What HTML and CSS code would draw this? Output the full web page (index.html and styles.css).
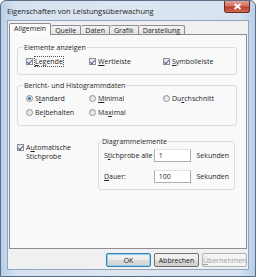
FILE: index.html
```html
<!DOCTYPE html>
<html lang="de">
<head>
  <meta charset="UTF-8" />
  <title>Eigenschaften von Leistungsüberwachung</title>
  <link rel="stylesheet" href="styles.css">
</head>
<body>
  <div class="window">
    <div class="titlebar">
      <span class="title">Eigenschaften von Leistungsüberwachung</span>
      <span class="close">
        <svg width="9" height="7" viewBox="0 0 9 7"><path d="M1.5 1 L7.5 6 M7.5 1 L1.5 6" stroke="#fff" stroke-width="1.8"/></svg>
      </span>
    </div>

    <div class="client">
      <div class="tabs">
        <span class="tab active">Allgemein</span>
        <span class="tab">Quelle</span>
        <span class="tab">Daten</span>
        <span class="tab">Grafik</span>
        <span class="tab">Darstellung</span>
      </div>

      <div class="panel">
        <fieldset class="group elements">
          <legend>Elemente anzeigen</legend>
          <div class="grid">
            <label class="opt"><span class="check on"></span><span class="focus"><u>L</u>egende</span></label>
            <label class="opt"><span class="check on"></span><span><u>W</u>ertleiste</span></label>
            <label class="opt"><span class="check on"></span><span><u>S</u>ymbolleiste</span></label>
          </div>
        </fieldset>

        <fieldset class="group report">
          <legend>Bericht- und Histogrammdaten</legend>
          <div class="grid">
            <label class="opt"><span class="radio on"></span><span>S<u>t</u>andard</span></label>
            <label class="opt"><span class="radio"></span><span><u>M</u>inimal</span></label>
            <label class="opt"><span class="radio"></span><span>Du<u>r</u>chschnitt</span></label>
            <label class="opt"><span class="radio"></span><span>Be<u>i</u>behalten</span></label>
            <label class="opt"><span class="radio"></span><span>Ma<u>x</u>imal</span></label>
          </div>
        </fieldset>

        <div class="lower">
          <label class="opt auto"><span class="check on"></span><span>A<u>u</u>tomatische<br>Stichprobe</span></label>

          <fieldset class="group diagram">
            <legend>Diagrammelemente</legend>
            <div class="field">
              <span class="field-label">S<u>t</u>ichprobe alle</span>
              <span class="input">1</span>
              <span>Sekunden</span>
            </div>
            <div class="field">
              <span class="field-label"><u>D</u>auer:</span>
              <span class="input">100</span>
              <span>Sekunden</span>
            </div>
          </fieldset>
        </div>
      </div>

      <div class="buttons">
        <button class="btn default">OK</button>
        <button class="btn">Abbrechen</button>
        <button class="btn" disabled><u>Ü</u>bernehmen</button>
      </div>
    </div>
  </div>
</body>
</html>
```

FILE: styles.css
```css
body {
  margin: 0;
  font-family: 'Open Sans', 'Noto Sans', sans-serif;
  font-size: 7px;
  color: #262626;
  background: #fff;
}

u {
  text-decoration-thickness: 1px;
  text-underline-offset: 1px;
}

.window {
  width: 256px;
  height: 277px;
  box-sizing: border-box;
  border: 1px solid #5b6e85;
  border-radius: 6px 6px 0 0;
  background: linear-gradient(90deg, #b8cfe9 0%, #d6e2f0 6%, #dde6f1 50%, #d6e2f0 94%, #b8cfe9 100%);
  padding: 0 6px 6px;
  display: flex;
  flex-direction: column;
}

.titlebar {
  height: 19px;
  display: flex;
  justify-content: space-between;
}

.title {
  font-size: 7.5px;
  color: #1a1a1a;
  padding: 5px 0 0 0;
}

.close {
  width: 26px;
  height: 12px;
  margin-right: -1px;
  box-sizing: border-box;
  border: 1px solid #6b2a22;
  border-top: none;
  border-radius: 0 0 3px 3px;
  background: linear-gradient(#e2a195 0%, #cf7163 45%, #b8402d 55%, #d06b4f 100%);
  display: flex;
  align-items: center;
  justify-content: center;
}

.client {
  flex: 1;
  background: #f0f0f0;
  border: 1px solid #8fa4bf;
  display: flex;
  flex-direction: column;
  padding: 2px 1px 2px;
}

.tabs {
  height: 11px;
  display: flex;
  align-items: flex-end;
  position: relative;
  z-index: 1;
}

.tab {
  height: 9px;
  line-height: 9px;
  box-sizing: border-box;
  padding: 0 4px;
  border: 1px solid #8c8e94;
  border-bottom: none;
  border-left: none;
  border-radius: 2px 2px 0 0;
  background: linear-gradient(#f3f3f3, #e3e3e3);
}

.tab.active {
  height: 12px;
  line-height: 10px;
  margin-bottom: -1px;
  padding: 0 4px;
  border-left: 1px solid #8c8e94;
  background: #fbfbfb;
}

.panel {
  flex: 1;
  background: #f9f9f9;
  border: 1px solid #8c8e94;
  padding: 8px 9px 0 7px;
  display: flex;
  flex-direction: column;
}

.group {
  margin: 0;
  padding: 0 8px;
  border: 1px solid #d6dde3;
  border-radius: 3px;
  min-width: 0;
}

.group legend {
  padding: 0 1px;
  margin-left: -3px;
  line-height: 9px;
}

.elements {
  padding-top: 5px;
  padding-bottom: 8px;
}

.report {
  margin-top: 6px;
  padding-top: 4px;
  padding-bottom: 8px;
}

.grid {
  display: grid;
  grid-template-columns: 63px 74px auto;
  row-gap: 5px;
}

.opt {
  display: flex;
  align-items: center;
  gap: 2px;
  line-height: 9px;
}

.check {
  width: 7px;
  height: 7px;
  box-sizing: border-box;
  border: 1px solid #8e8f8f;
  background: linear-gradient(135deg, #dcdcdc, #fbfbfb);
  position: relative;
  flex: none;
}

.check.on::after {
  content: "";
  position: absolute;
  left: 1px;
  top: 0;
  width: 2px;
  height: 4px;
  border: solid #4a5f97;
  border-width: 0 1px 1px 0;
  transform: rotate(40deg);
}

.radio {
  width: 7px;
  height: 7px;
  box-sizing: border-box;
  border: 1px solid #939393;
  border-radius: 50%;
  background: linear-gradient(135deg, #d9d9d9, #f8f8f8);
  flex: none;
  position: relative;
}

.radio.on::after {
  content: "";
  position: absolute;
  left: 1px;
  top: 1px;
  width: 3px;
  height: 3px;
  border-radius: 50%;
  background: #2f6fb3;
}

.focus {
  outline: 1px dotted #555;
  outline-offset: 0;
}

.lower {
  display: flex;
  align-items: flex-start;
  margin-top: 11px;
}

.auto {
  align-items: flex-start;
  width: 81px;
  margin-top: 6px;
}

.auto .check {
  margin-top: 1px;
}

.diagram {
  flex: 1;
  margin: 0 2px 0 0;
  padding: 3px 5px 6px;
}

.field {
  display: flex;
  align-items: center;
  height: 13px;
  margin-bottom: 8px;
}

.field:last-child {
  margin-bottom: 0;
}

.field-label {
  width: 52px;
}

.input {
  width: 39px;
  height: 13px;
  box-sizing: border-box;
  border: 1px solid #abadb3;
  border-top-color: #e2e3ea;
  background: #fff;
  padding: 0 4px;
  line-height: 11px;
  margin-right: 5px;
}

.buttons {
  height: 14px;
  margin-top: 4px;
  display: flex;
  justify-content: flex-end;
  gap: 3px;
}

.btn {
  width: 45px;
  height: 14px;
  padding: 0;
  font-family: inherit;
  font-size: 7px;
  color: #1e1e1e;
  border: 1px solid #707070;
  border-radius: 2px;
  background: linear-gradient(#f2f2f2 0%, #ebebeb 50%, #dddddd 51%, #cfcfcf 100%);
}

.btn.default {
  border-color: #3c7fb1;
  box-shadow: inset 0 0 0 1px #8fd1f3;
}

.btn:disabled {
  color: #a0a0a0;
  border-color: #adb2b5;
  background: #f4f4f4;
}
```
